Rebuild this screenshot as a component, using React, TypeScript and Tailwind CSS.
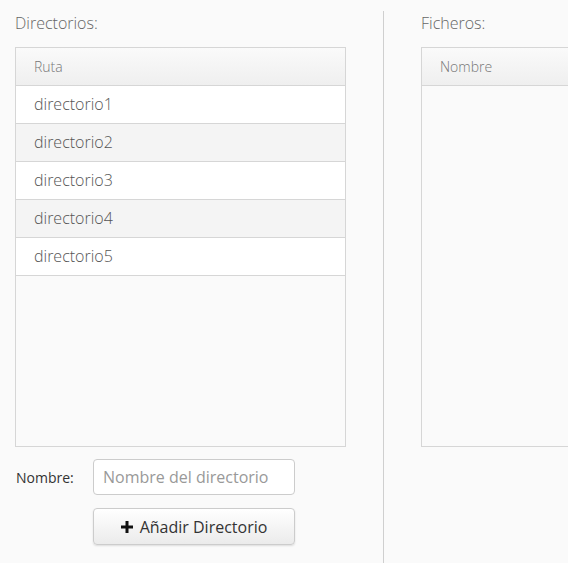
const directorios = ['directorio1', 'directorio2', 'directorio3', 'directorio4', 'directorio5'];

function TableHeader({ label }: { label: string }) {
  return (
    <div className="h-[38px] flex items-center px-[18px] pb-px border-b border-[#d6d6d6] bg-gradient-to-b from-[#fafafa] to-[#efefef] text-[14px] font-light text-[#777]">
      {label}
    </div>
  );
}

export default function App() {
  return (
    <div className="h-[563px] w-[568px] overflow-hidden bg-[#fafafa] flex font-['Open_Sans',sans-serif]">
      {/* Directorios */}
      <div className="w-[383px] shrink-0 pl-[15px] pr-[37px] pt-[13px]">
        <div className="h-[20px] leading-[20px] text-[16px] font-light text-[#666] mb-[14px]">Directorios:</div>
        <div className="h-[400px] border border-[#d6d6d6] flex flex-col">
          <TableHeader label="Ruta" />
          {directorios.map((d, i) => (
            <div
              key={d}
              className={`h-[38px] flex items-center px-[18px] pb-[2px] border-b border-[#d6d6d6] text-[16px] font-light text-[#555] ${i % 2 === 0 ? 'bg-white' : 'bg-[#f4f4f4]'}`}
            >
              {d}
            </div>
          ))}
        </div>

        <div className="mt-[12px] flex items-center">
          <label className="w-[78px] pl-px text-[14px] text-[#333]">Nombre:</label>
          <input
            className="w-[202px] h-[36px] px-[9px] border border-[#ccc] rounded-[4px] bg-white text-[16px] text-[#555] placeholder:text-[#999] outline-none"
            placeholder="Nombre del directorio"
          />
        </div>
        <div className="mt-[13px] pl-[78px]">
          <button className="w-[202px] h-[37px] flex items-center justify-center gap-[7px] border border-[#ccc] rounded-[4px] bg-gradient-to-b from-white to-[#ebebeb] shadow-[0_1px_2px_rgba(0,0,0,0.12)] text-[16px] text-[#333]">
            <svg width="12" height="12" viewBox="0 0 12 12" className="text-[#111]">
              <rect x="4.5" y="0" width="3" height="12" fill="currentColor" />
              <rect x="0" y="4.5" width="12" height="3" fill="currentColor" />
            </svg>
            Añadir Directorio
          </button>
        </div>
      </div>

      {/* divisor */}
      <div className="w-px shrink-0 mt-[11px] bg-[#cfcfcf]" />

      {/* Ficheros */}
      <div className="shrink-0 pl-[37px] pt-[13px]">
        <div className="h-[20px] leading-[20px] text-[16px] font-light text-[#666] mb-[14px]">Ficheros:</div>
        <div className="w-[331px] h-[400px] border border-[#d6d6d6] flex flex-col">
          <TableHeader label="Nombre" />
        </div>
      </div>
    </div>
  );
}
